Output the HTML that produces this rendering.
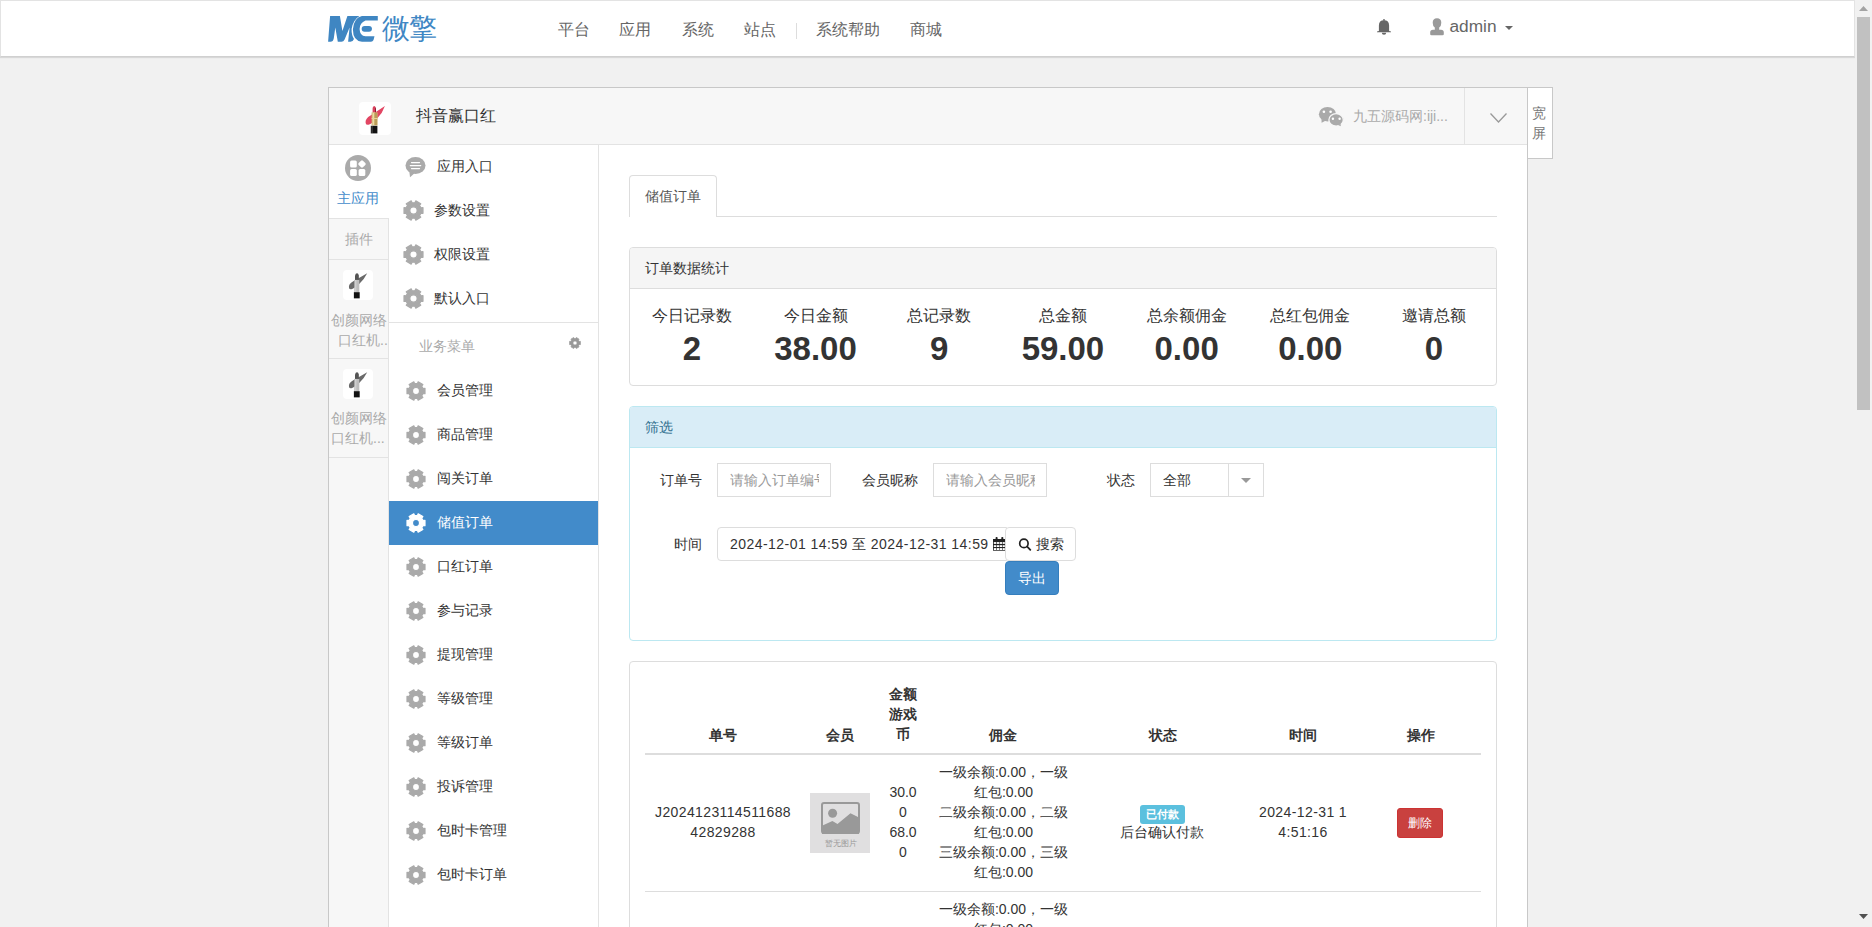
<!DOCTYPE html>
<html><head><meta charset="utf-8">
<style>
*{box-sizing:border-box}
html,body{margin:0;padding:0}
body{width:1872px;height:927px;overflow:hidden;background:#f1f1f1;font-family:"Liberation Sans",sans-serif;font-size:14px;color:#333;position:relative}
.a{position:absolute;white-space:nowrap}
svg{display:block}
#nav{position:absolute;left:0;top:0;width:1855px;height:57px;background:#fff;border:1px solid #e3e3e3;border-bottom-color:#d0d0d0;box-shadow:0 1px 1px rgba(0,0,0,.1)}
.nv{font-size:16px;color:#666;line-height:20px;top:20px}
#sb{position:absolute;left:1855px;top:0;width:17px;height:927px;background:#f1f1f1}
#panel{position:absolute;left:328px;top:87px;width:1200px;height:860px;background:#fff;border:1px solid #c8c8c8}
#phead{position:absolute;left:329px;top:88px;width:1198px;height:57px;background:#f7f7f7;border-bottom:1px solid #e3e3e3}
#wide{position:absolute;left:1527px;top:87px;width:26px;height:72px;background:#fff;border:1px solid #c8c8c8}
#lcol{position:absolute;left:329px;top:218px;width:60px;height:720px;background:#f7f7f7;border-right:1px solid #e3e3e3;border-top:1px solid #e3e3e3}
#menu{position:absolute;left:389px;top:145px;width:210px;height:790px;background:#fff;border-right:1px solid #e3e3e3}
.mi{position:absolute;left:0;width:209px;height:44px}
.mi .g{position:absolute;left:16px;top:12px}
.mi .t{position:absolute;left:48px;top:0;line-height:44px;font-size:14px;color:#333}
.mi.on{background:#428bca}
.mi.on .t{color:#fff}
.plug{position:absolute;left:329px;width:59px;height:100px;border-bottom:1px solid #e3e3e3;background:#f7f7f7}
.plug .ic{position:absolute;left:14px;top:11px;width:30px;height:30px;background:#fff;border-radius:4px}
.plug .tx{position:absolute;left:0;width:59px;text-align:center;font-size:14px;line-height:20px;color:#aaa;white-space:normal}
.pnl{position:absolute;left:629px;width:868px;border:1px solid #ddd;border-radius:4px;background:#fff}
.ph{position:absolute;left:0;top:0;width:866px;height:41px;background:#f5f5f5;border-bottom:1px solid #ddd;border-radius:3px 3px 0 0}
.stat{position:absolute;top:16px;width:123.7px;text-align:center}
.stat .l{font-size:16px;line-height:22px;color:#333}
.stat .n{font-size:33px;line-height:36px;padding-top:4px;font-weight:bold;color:#333}
.lbl{font-size:14px;color:#333;line-height:20px}
.inp{position:absolute;height:34px;border:1px solid #ddd;background:#fff;overflow:hidden;font-size:14px;line-height:32px;padding-left:12px;color:#999;white-space:nowrap}
.th{font-size:14px;font-weight:bold;line-height:22px;color:#333}
.td{font-size:14px;line-height:20px;color:#333}
.mt{font-size:14px;line-height:22px;color:#333}
</style></head><body>

<!-- navbar -->
<div id="nav"></div>
<svg class="a" style="left:328px;top:16px" width="50" height="26" viewBox="0 0 50 26">
  <path fill="#3f86c2" d="M0.1 25.7 L2.1 0 L11.9 0 L14.4 15.1 L19.4 0 L31.4 0 Q25 4 23.6 13 Q23.4 19 26 23 Q25 25.7 22.5 25.7 L20.1 25.7 L21.6 11.4 L16.6 23.5 Q15.6 25.7 13.4 25.7 L9.8 25.7 L7.3 11.4 L5.8 22.2 Q5.2 25.7 2.5 25.7Z"/>
  <path fill="#3f86c2" d="M33.9 0 L49.8 0 L49.8 4.4 L37.5 4.6 Q31.8 7 31.6 13 Q31.8 20 37.5 20.2 L46.5 20.2 L45.5 24 Q44.8 25.7 43 25.7 L34 25.7 Q25 25 24.9 13.5 Q25.5 2 33.9 0Z"/>
  <path fill="#3f86c2" d="M36.6 9.9 L41 9.9 A2.95 2.95 0 0 1 41 15.8 L36.6 15.8 A2.95 2.95 0 0 1 36.6 9.9Z"/>
</svg>
<div class="a" style="left:382px;top:11px;font-size:28px;line-height:36px;color:#4087c4;letter-spacing:-1px;font-weight:300">微擎</div>
<div class="a nv" style="left:558px">平台</div>
<div class="a nv" style="left:619px">应用</div>
<div class="a nv" style="left:682px">系统</div>
<div class="a nv" style="left:744px">站点</div>
<div class="a" style="left:796px;top:23px;width:1px;height:16px;background:#ddd"></div>
<div class="a nv" style="left:816px">系统帮助</div>
<div class="a nv" style="left:910px">商城</div>
<!-- bell -->
<svg class="a" style="left:1377px;top:19px" width="14" height="16" viewBox="0 0 14 16"><circle cx="7" cy="0.9" r="0.9" fill="#666"/><path fill="#666" d="M1.9 12 L1.9 6.5 Q1.9 1.2 7 1.2 Q12.1 1.2 12.1 6.5 L12.1 12 L14 12.6 L14 13.3 L0 13.3 L0 12.6Z"/><path fill="#666" d="M4.8 13.8 L9.2 13.8 Q9.2 15.8 7 15.8 Q4.8 15.8 4.8 13.8Z"/></svg>
<!-- user -->
<svg class="a" style="left:1430px;top:18px" width="14" height="18" viewBox="0 0 14 18"><path fill="#999" d="M7 0.2 Q11.3 0.2 11.3 4.8 Q11.3 8.2 9.2 9.6 L9.2 11.7 L11 11.7 Q13.8 12 13.8 14.2 L13.8 16.2 Q13.8 17.3 12.5 17.3 L1.5 17.3 Q0.2 17.3 0.2 16.2 L0.2 14.2 Q0.2 12 3 11.7 L4.8 11.7 L4.8 9.6 Q2.7 8.2 2.7 4.8 Q2.7 0.2 7 0.2Z"/></svg>
<div class="a" style="left:1449.5px;top:15px;font-size:17.3px;line-height:22px;color:#666">admin</div>
<svg class="a" style="left:1505px;top:26px" width="8" height="4" viewBox="0 0 8 4"><path fill="#666" d="M0 0 L8 0 L4 4Z"/></svg>

<!-- scrollbar -->
<div id="sb"></div>
<svg class="a" style="left:1859px;top:6px" width="9" height="5" viewBox="0 0 9 5"><path fill="#a3a3a3" d="M4.5 0 L9 5 L0 5Z"/></svg>
<div class="a" style="left:1857px;top:17px;width:13px;height:393px;background:#c1c1c1"></div>
<svg class="a" style="left:1859px;top:914px" width="9" height="5" viewBox="0 0 9 5"><path fill="#505050" d="M0 0 L9 0 L4.5 5Z"/></svg>

<!-- panel -->
<div id="panel"></div>
<div id="phead"></div>
<div id="wide"></div>
<div class="a" style="left:1532px;top:103px;font-size:14px;line-height:20px;color:#777;white-space:normal;width:16px">宽屏</div>

<!-- app icon -->
<div class="a" style="left:359px;top:102px;width:32px;height:33px;background:#fff;border-radius:4px"></div>
<svg class="a" style="left:359px;top:102px" width="32" height="33" viewBox="0 0 32 33">
  <path fill="#e24663" d="M6.6 21 Q6 16.5 11.5 13.5 L25.9 3.9 Q23.5 11 18.5 16 Q13 21.5 9.5 22.8 Q7 23.2 6.6 21Z"/>
  <path fill="#d9405c" d="M13.6 10.5 L13.6 6 Q14.2 4 15.4 4 Q16.8 4.5 17 6.5 L17 10.5Z"/><path fill="#8a1f33" d="M16 5.5 L17 6.5 L17 10.5 L16 10.5Z"/>
  <rect x="12.6" y="10.4" width="6" height="13" fill="#cdb06a"/>
  <rect x="13.6" y="11" width="1.2" height="12" fill="#f3e4b4"/>
  <rect x="16.6" y="11" width="0.8" height="12" fill="#9f8345"/>
  <rect x="12.6" y="16" width="6" height="1" fill="#e8d59a"/>
  <rect x="11.8" y="23.8" width="6.6" height="7.6" fill="#111"/>
  <rect x="12.5" y="24" width="1.2" height="7" fill="#444"/>
</svg>
<div class="a" style="left:416px;top:105px;font-size:16px;line-height:22px;color:#333">抖音赢口红</div>
<!-- wechat -->
<svg class="a" style="left:1318px;top:106px" width="27" height="21" viewBox="0 0 27 21">
  <ellipse cx="9.5" cy="8.2" rx="8.6" ry="7.3" fill="#aaa"/>
  <path fill="#aaa" d="M3.5 13 L3.6 16.8 L8 14.5Z"/>
  <circle cx="5.9" cy="5.7" r="1.3" fill="#fff"/><circle cx="12.6" cy="5.7" r="1.3" fill="#fff"/>
  <ellipse cx="18.1" cy="13.9" rx="7.2" ry="6.2" fill="#aaa" stroke="#f7f7f7" stroke-width="1.3"/>
  <path fill="#aaa" d="M20 19 L22.8 20.3 L22.5 17.5Z"/>
  <circle cx="14.9" cy="12.8" r="1.2" fill="#fff"/><circle cx="21.6" cy="12.8" r="1.2" fill="#fff"/>
</svg>
<div class="a" style="left:1353px;top:105px;font-size:14px;line-height:22px;color:#aaa">九五源码网:iji...</div>
<div class="a" style="left:1464px;top:88px;width:1px;height:56px;background:#e3e3e3"></div>
<svg class="a" style="left:1490px;top:113px" width="17" height="10" viewBox="0 0 17 10"><path fill="none" stroke="#999" stroke-width="1.3" d="M0.5 0.5 L8.5 9 L16.5 0.5"/></svg>

<!-- left icon column -->
<svg class="a" style="left:345px;top:154.5px" width="26" height="26" viewBox="0 0 26 26">
  <circle cx="13" cy="13" r="13" fill="#aaa"/>
  <rect x="5.1" y="5.4" width="6.7" height="7" rx="1.5" fill="#fff"/>
  <rect x="5.1" y="14.1" width="6.7" height="6.8" rx="1.5" fill="#fff"/>
  <rect x="13.6" y="14.1" width="6.7" height="6.8" rx="1.5" fill="#fff"/>
  <rect x="14.0" y="6.0" width="6.0" height="6.0" rx="1.3" fill="#fff" transform="rotate(45 17 9)"/>
</svg>
<div class="a" style="left:337px;top:187px;font-size:14px;line-height:22px;color:#428bca">主应用</div>
<div id="lcol"></div>
<div class="a" style="left:329px;top:218px;width:59px;height:42px;border-top:1px solid #e3e3e3;border-bottom:1px solid #e3e3e3;text-align:center;line-height:40px;color:#aaa;font-size:14px">插件</div>
<div class="plug" style="top:260px;height:99px">
  <div class="ic" style="top:10px"><svg width="30" height="30" viewBox="0 0 32 33" preserveAspectRatio="none"><path fill="#6a6a6a" d="M6.4 19.9 Q5.5 15.5 11 12.5 L25.8 3.6 Q22.5 10.5 17.5 15.2 Q12.5 20 9 21.2 Q6.8 21.6 6.4 19.9Z"/><path fill="#555" d="M12.8 10.9 L12.8 6 Q13.5 3.7 14.9 3.7 Q16.4 3.7 16.9 6 L16.9 10.9Z"/><rect x="12.0" y="10.9" width="5.4" height="13.5" fill="#bdbdbd"/><rect x="13" y="11" width="1.2" height="13" fill="#d5d5d5"/><rect x="11.6" y="24.4" width="6.2" height="6.8" fill="#111"/></svg></div>
  <div class="tx" style="top:50px">创颜网络</div><div class="tx" style="top:70px;left:9px;width:50px;text-align:left;overflow:hidden;white-space:nowrap">口红机...</div>
</div>
<div class="plug" style="top:359px;height:99px">
  <div class="ic" style="top:10px"><svg width="30" height="30" viewBox="0 0 32 33" preserveAspectRatio="none"><path fill="#6a6a6a" d="M6.4 19.9 Q5.5 15.5 11 12.5 L25.8 3.6 Q22.5 10.5 17.5 15.2 Q12.5 20 9 21.2 Q6.8 21.6 6.4 19.9Z"/><path fill="#555" d="M12.8 10.9 L12.8 6 Q13.5 3.7 14.9 3.7 Q16.4 3.7 16.9 6 L16.9 10.9Z"/><rect x="12.0" y="10.9" width="5.4" height="13.5" fill="#bdbdbd"/><rect x="13" y="11" width="1.2" height="13" fill="#d5d5d5"/><rect x="11.6" y="24.4" width="6.2" height="6.8" fill="#111"/></svg></div>
  <div class="tx" style="top:49px">创颜网络</div><div class="tx" style="top:69px;white-space:nowrap;text-align:left;left:2px">口红机...</div>
</div>

<!-- menu -->
<div id="menu"></div>
<svg class="a" style="left:405px;top:156px" width="21" height="22" viewBox="0 0 21 22"><ellipse cx="10.5" cy="9.4" rx="10" ry="8.5" fill="#aaa"/><path fill="#aaa" d="M4.2 14.5 L5 21.2 L9.5 17.2Z"/><path d="M6.5 6.5 H14.5 M5.3 9.6 H15.7 M6.5 12.5 H14.5" stroke="#fff" stroke-width="1.25" stroke-linecap="round"/></svg>
<div class="a mt" style="left:437px;top:155px">应用入口</div>
<svg class="a" style="left:403px;top:200px" width="21" height="21" viewBox="0 0 20 20" fill="#aaa"><path stroke="#aaa" stroke-width="1.2" stroke-linejoin="round" d="M17.08 7.53 L19.00 7.28 L19.00 12.72 L17.08 12.47 L15.68 14.90 L16.85 16.43 L12.15 19.15 L11.41 17.37 L8.59 17.37 L7.85 19.15 L3.15 16.43 L4.32 14.90 L2.92 12.47 L1.00 12.72 L1.00 7.28 L2.92 7.53 L4.32 5.10 L3.15 3.57 L7.85 0.85 L8.59 2.63 L11.41 2.63 L12.15 0.85 L16.85 3.57 L15.68 5.10Z M6.50 10.00 a3.50 3.50 0 1 0 7.00 0 a3.50 3.50 0 1 0 -7.00 0Z"/></svg>
<div class="a mt" style="left:434px;top:199px">参数设置</div>
<svg class="a" style="left:403px;top:244px" width="21" height="21" viewBox="0 0 20 20" fill="#aaa"><path stroke="#aaa" stroke-width="1.2" stroke-linejoin="round" d="M17.08 7.53 L19.00 7.28 L19.00 12.72 L17.08 12.47 L15.68 14.90 L16.85 16.43 L12.15 19.15 L11.41 17.37 L8.59 17.37 L7.85 19.15 L3.15 16.43 L4.32 14.90 L2.92 12.47 L1.00 12.72 L1.00 7.28 L2.92 7.53 L4.32 5.10 L3.15 3.57 L7.85 0.85 L8.59 2.63 L11.41 2.63 L12.15 0.85 L16.85 3.57 L15.68 5.10Z M6.50 10.00 a3.50 3.50 0 1 0 7.00 0 a3.50 3.50 0 1 0 -7.00 0Z"/></svg>
<div class="a mt" style="left:434px;top:243px">权限设置</div>
<svg class="a" style="left:403px;top:288px" width="21" height="21" viewBox="0 0 20 20" fill="#aaa"><path stroke="#aaa" stroke-width="1.2" stroke-linejoin="round" d="M17.08 7.53 L19.00 7.28 L19.00 12.72 L17.08 12.47 L15.68 14.90 L16.85 16.43 L12.15 19.15 L11.41 17.37 L8.59 17.37 L7.85 19.15 L3.15 16.43 L4.32 14.90 L2.92 12.47 L1.00 12.72 L1.00 7.28 L2.92 7.53 L4.32 5.10 L3.15 3.57 L7.85 0.85 L8.59 2.63 L11.41 2.63 L12.15 0.85 L16.85 3.57 L15.68 5.10Z M6.50 10.00 a3.50 3.50 0 1 0 7.00 0 a3.50 3.50 0 1 0 -7.00 0Z"/></svg>
<div class="a mt" style="left:434px;top:287px">默认入口</div>
<div class="a" style="left:389px;top:322px;width:209px;height:1px;background:#e3e3e3"></div>
<div class="a" style="left:419px;top:335px;font-size:14px;line-height:22px;color:#aaa">业务菜单</div>
<svg class="a" style="left:569px;top:337px" width="12" height="12" viewBox="0 0 20 20" fill="#999"><path stroke="#999" stroke-width="1.2" stroke-linejoin="round" d="M17.08 7.53 L19.00 7.28 L19.00 12.72 L17.08 12.47 L15.68 14.90 L16.85 16.43 L12.15 19.15 L11.41 17.37 L8.59 17.37 L7.85 19.15 L3.15 16.43 L4.32 14.90 L2.92 12.47 L1.00 12.72 L1.00 7.28 L2.92 7.53 L4.32 5.10 L3.15 3.57 L7.85 0.85 L8.59 2.63 L11.41 2.63 L12.15 0.85 L16.85 3.57 L15.68 5.10Z M6.50 10.00 a3.50 3.50 0 1 0 7.00 0 a3.50 3.50 0 1 0 -7.00 0Z"/></svg>
<svg class="a" style="left:405.5px;top:381px" width="20" height="20" viewBox="0 0 20 20" fill="#aaa"><path stroke="#aaa" stroke-width="1.2" stroke-linejoin="round" d="M17.08 7.53 L19.00 7.28 L19.00 12.72 L17.08 12.47 L15.68 14.90 L16.85 16.43 L12.15 19.15 L11.41 17.37 L8.59 17.37 L7.85 19.15 L3.15 16.43 L4.32 14.90 L2.92 12.47 L1.00 12.72 L1.00 7.28 L2.92 7.53 L4.32 5.10 L3.15 3.57 L7.85 0.85 L8.59 2.63 L11.41 2.63 L12.15 0.85 L16.85 3.57 L15.68 5.10Z M6.50 10.00 a3.50 3.50 0 1 0 7.00 0 a3.50 3.50 0 1 0 -7.00 0Z"/></svg>
<div class="a mt" style="left:437px;top:379px">会员管理</div>
<svg class="a" style="left:405.5px;top:425px" width="20" height="20" viewBox="0 0 20 20" fill="#aaa"><path stroke="#aaa" stroke-width="1.2" stroke-linejoin="round" d="M17.08 7.53 L19.00 7.28 L19.00 12.72 L17.08 12.47 L15.68 14.90 L16.85 16.43 L12.15 19.15 L11.41 17.37 L8.59 17.37 L7.85 19.15 L3.15 16.43 L4.32 14.90 L2.92 12.47 L1.00 12.72 L1.00 7.28 L2.92 7.53 L4.32 5.10 L3.15 3.57 L7.85 0.85 L8.59 2.63 L11.41 2.63 L12.15 0.85 L16.85 3.57 L15.68 5.10Z M6.50 10.00 a3.50 3.50 0 1 0 7.00 0 a3.50 3.50 0 1 0 -7.00 0Z"/></svg>
<div class="a mt" style="left:437px;top:423px">商品管理</div>
<svg class="a" style="left:405.5px;top:469px" width="20" height="20" viewBox="0 0 20 20" fill="#aaa"><path stroke="#aaa" stroke-width="1.2" stroke-linejoin="round" d="M17.08 7.53 L19.00 7.28 L19.00 12.72 L17.08 12.47 L15.68 14.90 L16.85 16.43 L12.15 19.15 L11.41 17.37 L8.59 17.37 L7.85 19.15 L3.15 16.43 L4.32 14.90 L2.92 12.47 L1.00 12.72 L1.00 7.28 L2.92 7.53 L4.32 5.10 L3.15 3.57 L7.85 0.85 L8.59 2.63 L11.41 2.63 L12.15 0.85 L16.85 3.57 L15.68 5.10Z M6.50 10.00 a3.50 3.50 0 1 0 7.00 0 a3.50 3.50 0 1 0 -7.00 0Z"/></svg>
<div class="a mt" style="left:437px;top:467px">闯关订单</div>
<div class="a" style="left:389px;top:501px;width:209px;height:44px;background:#428bca"></div>
<svg class="a" style="left:405.5px;top:513px" width="20" height="20" viewBox="0 0 20 20" fill="#fff"><path stroke="#fff" stroke-width="1.2" stroke-linejoin="round" d="M17.08 7.53 L19.00 7.28 L19.00 12.72 L17.08 12.47 L15.68 14.90 L16.85 16.43 L12.15 19.15 L11.41 17.37 L8.59 17.37 L7.85 19.15 L3.15 16.43 L4.32 14.90 L2.92 12.47 L1.00 12.72 L1.00 7.28 L2.92 7.53 L4.32 5.10 L3.15 3.57 L7.85 0.85 L8.59 2.63 L11.41 2.63 L12.15 0.85 L16.85 3.57 L15.68 5.10Z M6.50 10.00 a3.50 3.50 0 1 0 7.00 0 a3.50 3.50 0 1 0 -7.00 0Z"/></svg>
<div class="a mt" style="left:437px;top:511px;color:#fff">储值订单</div>
<svg class="a" style="left:405.5px;top:557px" width="20" height="20" viewBox="0 0 20 20" fill="#aaa"><path stroke="#aaa" stroke-width="1.2" stroke-linejoin="round" d="M17.08 7.53 L19.00 7.28 L19.00 12.72 L17.08 12.47 L15.68 14.90 L16.85 16.43 L12.15 19.15 L11.41 17.37 L8.59 17.37 L7.85 19.15 L3.15 16.43 L4.32 14.90 L2.92 12.47 L1.00 12.72 L1.00 7.28 L2.92 7.53 L4.32 5.10 L3.15 3.57 L7.85 0.85 L8.59 2.63 L11.41 2.63 L12.15 0.85 L16.85 3.57 L15.68 5.10Z M6.50 10.00 a3.50 3.50 0 1 0 7.00 0 a3.50 3.50 0 1 0 -7.00 0Z"/></svg>
<div class="a mt" style="left:437px;top:555px">口红订单</div>
<svg class="a" style="left:405.5px;top:601px" width="20" height="20" viewBox="0 0 20 20" fill="#aaa"><path stroke="#aaa" stroke-width="1.2" stroke-linejoin="round" d="M17.08 7.53 L19.00 7.28 L19.00 12.72 L17.08 12.47 L15.68 14.90 L16.85 16.43 L12.15 19.15 L11.41 17.37 L8.59 17.37 L7.85 19.15 L3.15 16.43 L4.32 14.90 L2.92 12.47 L1.00 12.72 L1.00 7.28 L2.92 7.53 L4.32 5.10 L3.15 3.57 L7.85 0.85 L8.59 2.63 L11.41 2.63 L12.15 0.85 L16.85 3.57 L15.68 5.10Z M6.50 10.00 a3.50 3.50 0 1 0 7.00 0 a3.50 3.50 0 1 0 -7.00 0Z"/></svg>
<div class="a mt" style="left:437px;top:599px">参与记录</div>
<svg class="a" style="left:405.5px;top:645px" width="20" height="20" viewBox="0 0 20 20" fill="#aaa"><path stroke="#aaa" stroke-width="1.2" stroke-linejoin="round" d="M17.08 7.53 L19.00 7.28 L19.00 12.72 L17.08 12.47 L15.68 14.90 L16.85 16.43 L12.15 19.15 L11.41 17.37 L8.59 17.37 L7.85 19.15 L3.15 16.43 L4.32 14.90 L2.92 12.47 L1.00 12.72 L1.00 7.28 L2.92 7.53 L4.32 5.10 L3.15 3.57 L7.85 0.85 L8.59 2.63 L11.41 2.63 L12.15 0.85 L16.85 3.57 L15.68 5.10Z M6.50 10.00 a3.50 3.50 0 1 0 7.00 0 a3.50 3.50 0 1 0 -7.00 0Z"/></svg>
<div class="a mt" style="left:437px;top:643px">提现管理</div>
<svg class="a" style="left:405.5px;top:689px" width="20" height="20" viewBox="0 0 20 20" fill="#aaa"><path stroke="#aaa" stroke-width="1.2" stroke-linejoin="round" d="M17.08 7.53 L19.00 7.28 L19.00 12.72 L17.08 12.47 L15.68 14.90 L16.85 16.43 L12.15 19.15 L11.41 17.37 L8.59 17.37 L7.85 19.15 L3.15 16.43 L4.32 14.90 L2.92 12.47 L1.00 12.72 L1.00 7.28 L2.92 7.53 L4.32 5.10 L3.15 3.57 L7.85 0.85 L8.59 2.63 L11.41 2.63 L12.15 0.85 L16.85 3.57 L15.68 5.10Z M6.50 10.00 a3.50 3.50 0 1 0 7.00 0 a3.50 3.50 0 1 0 -7.00 0Z"/></svg>
<div class="a mt" style="left:437px;top:687px">等级管理</div>
<svg class="a" style="left:405.5px;top:733px" width="20" height="20" viewBox="0 0 20 20" fill="#aaa"><path stroke="#aaa" stroke-width="1.2" stroke-linejoin="round" d="M17.08 7.53 L19.00 7.28 L19.00 12.72 L17.08 12.47 L15.68 14.90 L16.85 16.43 L12.15 19.15 L11.41 17.37 L8.59 17.37 L7.85 19.15 L3.15 16.43 L4.32 14.90 L2.92 12.47 L1.00 12.72 L1.00 7.28 L2.92 7.53 L4.32 5.10 L3.15 3.57 L7.85 0.85 L8.59 2.63 L11.41 2.63 L12.15 0.85 L16.85 3.57 L15.68 5.10Z M6.50 10.00 a3.50 3.50 0 1 0 7.00 0 a3.50 3.50 0 1 0 -7.00 0Z"/></svg>
<div class="a mt" style="left:437px;top:731px">等级订单</div>
<svg class="a" style="left:405.5px;top:777px" width="20" height="20" viewBox="0 0 20 20" fill="#aaa"><path stroke="#aaa" stroke-width="1.2" stroke-linejoin="round" d="M17.08 7.53 L19.00 7.28 L19.00 12.72 L17.08 12.47 L15.68 14.90 L16.85 16.43 L12.15 19.15 L11.41 17.37 L8.59 17.37 L7.85 19.15 L3.15 16.43 L4.32 14.90 L2.92 12.47 L1.00 12.72 L1.00 7.28 L2.92 7.53 L4.32 5.10 L3.15 3.57 L7.85 0.85 L8.59 2.63 L11.41 2.63 L12.15 0.85 L16.85 3.57 L15.68 5.10Z M6.50 10.00 a3.50 3.50 0 1 0 7.00 0 a3.50 3.50 0 1 0 -7.00 0Z"/></svg>
<div class="a mt" style="left:437px;top:775px">投诉管理</div>
<svg class="a" style="left:405.5px;top:821px" width="20" height="20" viewBox="0 0 20 20" fill="#aaa"><path stroke="#aaa" stroke-width="1.2" stroke-linejoin="round" d="M17.08 7.53 L19.00 7.28 L19.00 12.72 L17.08 12.47 L15.68 14.90 L16.85 16.43 L12.15 19.15 L11.41 17.37 L8.59 17.37 L7.85 19.15 L3.15 16.43 L4.32 14.90 L2.92 12.47 L1.00 12.72 L1.00 7.28 L2.92 7.53 L4.32 5.10 L3.15 3.57 L7.85 0.85 L8.59 2.63 L11.41 2.63 L12.15 0.85 L16.85 3.57 L15.68 5.10Z M6.50 10.00 a3.50 3.50 0 1 0 7.00 0 a3.50 3.50 0 1 0 -7.00 0Z"/></svg>
<div class="a mt" style="left:437px;top:819px">包时卡管理</div>
<svg class="a" style="left:405.5px;top:865px" width="20" height="20" viewBox="0 0 20 20" fill="#aaa"><path stroke="#aaa" stroke-width="1.2" stroke-linejoin="round" d="M17.08 7.53 L19.00 7.28 L19.00 12.72 L17.08 12.47 L15.68 14.90 L16.85 16.43 L12.15 19.15 L11.41 17.37 L8.59 17.37 L7.85 19.15 L3.15 16.43 L4.32 14.90 L2.92 12.47 L1.00 12.72 L1.00 7.28 L2.92 7.53 L4.32 5.10 L3.15 3.57 L7.85 0.85 L8.59 2.63 L11.41 2.63 L12.15 0.85 L16.85 3.57 L15.68 5.10Z M6.50 10.00 a3.50 3.50 0 1 0 7.00 0 a3.50 3.50 0 1 0 -7.00 0Z"/></svg>
<div class="a mt" style="left:437px;top:863px">包时卡订单</div>

<!-- content -->

<!-- tabs -->
<div class="a" style="left:629px;top:216px;width:868px;height:1px;background:#ddd"></div>
<div class="a" style="left:629px;top:175px;width:88px;height:42px;background:#fff;border:1px solid #ddd;border-bottom:0;border-radius:4px 4px 0 0"></div>
<div class="a" style="left:645px;top:185px;font-size:14px;line-height:22px;color:#555">储值订单</div>

<!-- stats panel -->
<div class="pnl" style="top:247px;height:139px">
  <div class="ph"></div>
</div>
<div class="a" style="left:645px;top:257px;font-size:14px;line-height:22px;color:#333">订单数据统计</div>
<div class="a" style="left:630px;top:289px;width:866px;height:96px">
  <div class="stat" style="left:0"><div class="l">今日记录数</div><div class="n">2</div></div>
  <div class="stat" style="left:123.7px"><div class="l">今日金额</div><div class="n">38.00</div></div>
  <div class="stat" style="left:247.4px"><div class="l">总记录数</div><div class="n">9</div></div>
  <div class="stat" style="left:371.1px"><div class="l">总金额</div><div class="n">59.00</div></div>
  <div class="stat" style="left:494.8px"><div class="l">总余额佣金</div><div class="n">0.00</div></div>
  <div class="stat" style="left:618.5px"><div class="l">总红包佣金</div><div class="n">0.00</div></div>
  <div class="stat" style="left:742.2px"><div class="l">邀请总额</div><div class="n">0</div></div>
</div>

<!-- filter panel -->
<div class="pnl" style="top:406px;height:235px;border-color:#bce8f1">
  <div class="ph" style="background:#d9edf7;border-bottom-color:#bce8f1"></div>
</div>
<div class="a" style="left:645px;top:416px;font-size:14px;line-height:22px;color:#31708f">筛选</div>
<div class="a lbl" style="left:660px;top:470px">订单号</div>
<div class="inp" style="left:717px;top:463px;width:114px"><span style="display:block;width:89px;overflow:hidden">请输入订单编号</span></div>
<div class="a lbl" style="left:862px;top:470px">会员昵称</div>
<div class="inp" style="left:933px;top:463px;width:114px"><span style="display:block;width:89px;overflow:hidden">请输入会员昵称</span></div>
<div class="a lbl" style="left:1107px;top:470px">状态</div>
<div class="inp" style="left:1150px;top:463px;width:114px;color:#333">全部</div>
<div class="a" style="left:1228px;top:464px;width:1px;height:32px;background:#ddd"></div>
<svg class="a" style="left:1241px;top:478px" width="10" height="5" viewBox="0 0 10 5"><path fill="#999" d="M0 0 L10 0 L5 5Z"/></svg>
<div class="a lbl" style="left:674px;top:534px">时间</div>
<div class="inp" style="left:717px;top:527px;width:290px;color:#333;border-radius:4px 0 0 4px;letter-spacing:0.45px">2024-12-01 14:59 至 2024-12-31 14:59</div>
<svg class="a" style="left:992.5px;top:537px" width="13" height="14" viewBox="0 0 13 14">
  <rect x="0" y="2" width="12.5" height="11.7" fill="#222"/>
  <rect x="2.6" y="0" width="2" height="3.8" rx="0.8" fill="#222"/><rect x="8.3" y="0" width="2" height="3.8" rx="0.8" fill="#222"/>
  <g fill="#fff"><rect x="0.8" y="5.1" width="2.5" height="1.8"/><rect x="3.9" y="5.1" width="2.3" height="1.8"/><rect x="6.7" y="5.1" width="2.3" height="1.8"/><rect x="9.6" y="5.1" width="2.2" height="1.8"/>
  <rect x="0.8" y="8.2" width="2.5" height="1.8"/><rect x="3.9" y="8.2" width="2.3" height="1.8"/><rect x="6.7" y="8.2" width="2.3" height="1.8"/><rect x="9.6" y="8.2" width="2.2" height="1.8"/>
  <rect x="0.8" y="11.1" width="2.5" height="1.9"/><rect x="3.9" y="11.1" width="2.3" height="1.9"/><rect x="6.7" y="11.1" width="2.3" height="1.9"/><rect x="9.6" y="11.1" width="2.2" height="1.9"/></g>
</svg>
<div class="a" style="left:1005px;top:527px;width:71px;height:34px;border:1px solid #ddd;border-radius:4px;background:#fff"></div>
<svg class="a" style="left:1018px;top:537px" width="14" height="14" viewBox="0 0 14 14"><circle cx="5.9" cy="6.4" r="4.2" fill="none" stroke="#222" stroke-width="1.7"/><path d="M9.2 9.7 L12.3 12.8" stroke="#222" stroke-width="1.8" stroke-linecap="round"/></svg>
<div class="a" style="left:1036px;top:533px;font-size:14px;line-height:22px;color:#333">搜索</div>
<div class="a" style="left:1005px;top:561px;width:54px;height:34px;background:#428bca;border:1px solid #357ebd;border-radius:4px"></div>
<div class="a" style="left:1018px;top:567px;font-size:14px;line-height:22px;color:#fff">导出</div>

<!-- table panel -->
<div class="pnl" style="top:661px;height:300px"></div>
<div class="a th" style="left:709px;top:724px">单号</div>
<div class="a th" style="left:826px;top:724px">会员</div>
<div class="a th" style="left:889px;top:684px;line-height:20px;white-space:normal;width:28px;text-align:center">金额游戏币</div>
<div class="a th" style="left:989px;top:724px">佣金</div>
<div class="a th" style="left:1149px;top:724px">状态</div>
<div class="a th" style="left:1289px;top:724px">时间</div>
<div class="a th" style="left:1407px;top:724px">操作</div>
<div class="a" style="left:645px;top:753px;width:836px;height:2px;background:#ddd"></div>
<div class="a td" style="left:645px;top:802px;width:156px;text-align:center;letter-spacing:0.38px">J2024123114511688<br>42829288</div>
<div class="a" style="left:810px;top:793px;width:60px;height:60px;background:#e0dfe0"></div>
<svg class="a" style="left:810px;top:793px" width="60" height="60" viewBox="0 0 60 60">
  <rect x="12" y="10" width="37" height="30" rx="2" fill="none" stroke="#999" stroke-width="2"/>
  <circle cx="22.6" cy="20.2" r="4.5" fill="#999"/>
  <path fill="#999" d="M12 32.7 L22.4 28 L27.5 31 L40.5 20.2 L49 24.5 L49 41 L12 41Z"/>
</svg>
<div class="a" style="left:825px;top:839px;font-size:8px;line-height:10px;color:#999">暂无图片</div>
<div class="a td" style="left:883px;top:782px;width:40px;text-align:center;white-space:normal">30.0<br>0<br>68.0<br>0</div>
<div class="a td" style="left:935px;top:762px;width:137px;text-align:center">一级余额:0.00，一级<br>红包:0.00<br>二级余额:0.00，二级<br>红包:0.00<br>三级余额:0.00，三级<br>红包:0.00</div>
<div class="a" style="left:1140px;top:805px;width:45px;height:19px;background:#5bc0de;border-radius:3px"></div>
<div class="a" style="left:1140px;top:804px;width:45px;text-align:center;font-size:11px;line-height:20px;color:#fff;font-weight:bold">已付款</div>
<div class="a td" style="left:1120px;top:822px">后台确认付款</div>
<div class="a td" style="left:1240px;top:802px;width:126px;text-align:center;letter-spacing:0.4px">2024-12-31 1<br>4:51:16</div>
<div class="a" style="left:1397px;top:808px;width:46px;height:30px;background:#c9413f;border:1px solid #c33;border-radius:3px"></div>
<div class="a" style="left:1397px;top:813px;width:46px;text-align:center;font-size:12px;line-height:20px;color:#fff">删除</div>
<div class="a" style="left:645px;top:891px;width:836px;height:1px;background:#ddd"></div>
<div class="a td" style="left:935px;top:899px;width:137px;text-align:center">一级余额:0.00，一级<br>红包:0.00</div>


</body></html>
